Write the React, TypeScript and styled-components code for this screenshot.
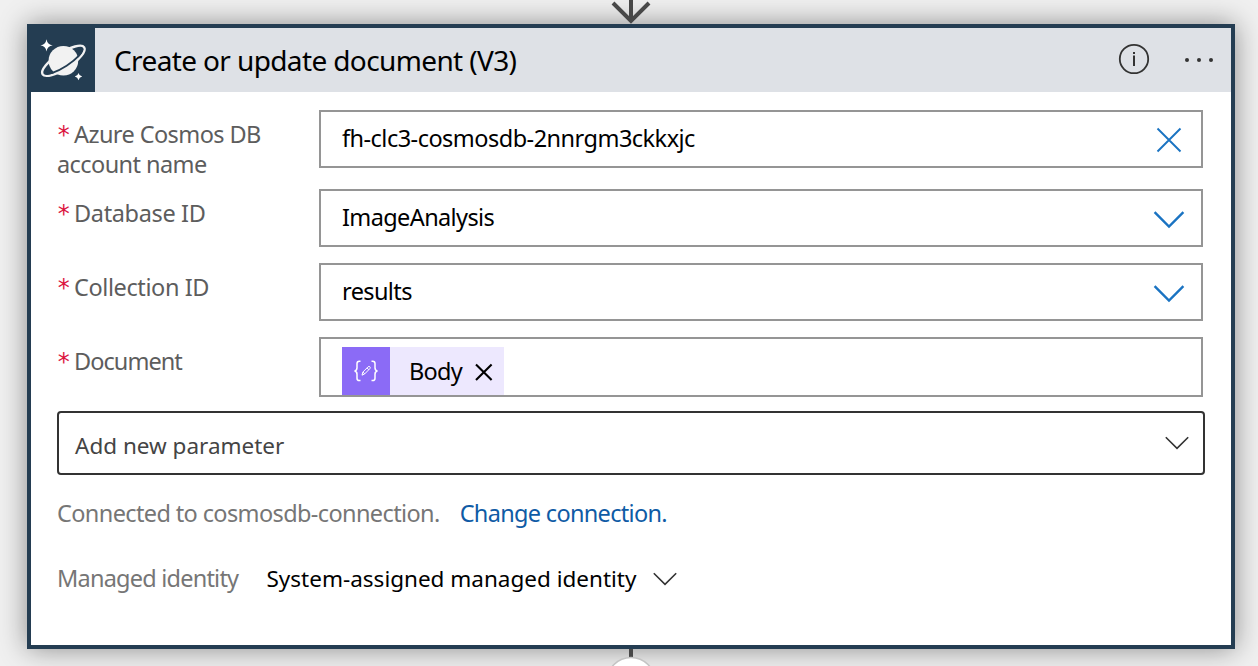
import React from "react";
import styled, { createGlobalStyle } from "styled-components";

const navy = "#243d52";

const GlobalStyle = createGlobalStyle`
  * { box-sizing: border-box; }
  body {
    margin: 0;
    background: #f0f0f0;
    font-family: "Noto Sans", "Open Sans", sans-serif;
    overflow: hidden;
  }
  svg { display: block; flex: none; }
`;

const Canvas = styled.main`
  width: 1258px;
  height: 666px;
  padding-left: 27px;
  overflow: hidden;
  display: flex;
  flex-direction: column;
`;

const Connector = styled.div<{ $height: number }>`
  width: 1208px;
  height: ${(p) => p.$height}px;
  flex: none;
  display: flex;
  justify-content: center;
  position: relative;
  z-index: 1;
`;

const Card = styled.section`
  width: 1208px;
  height: 625px;
  flex: none;
  background: #fff;
  border: 4px solid ${navy};
  box-shadow: 0 0 26px rgba(0, 0, 0, 0.42);
`;

const Header = styled.header`
  height: 64px;
  display: flex;
  align-items: center;
  background: #dee1e6;
`;

const Brand = styled.div`
  width: 64px;
  height: 64px;
  background: ${navy};
`;

const Title = styled.h1`
  flex: 1;
  margin: 0;
  padding: 0 0 1px 19px;
  font-size: 28px;
  font-weight: 400;
  line-height: 38px;
  letter-spacing: -0.62px;
  color: #000;
`;

const HeaderActions = styled.div`
  display: flex;
  align-items: center;
  gap: 34px;
  padding: 0 17px 2px 0;
`;

const Body = styled.div`
  padding: 18px 26px 0;
`;

const Row = styled.div<{ $gap?: number }>`
  display: flex;
  align-items: flex-start;
  margin-bottom: ${(p) => p.$gap ?? 16}px;
`;

const Label = styled.label<{ $spacing: number }>`
  width: 262px;
  padding-top: 9px;
  font-size: 23.5px;
  line-height: 30px;
  letter-spacing: ${(p) => p.$spacing}px;
  color: #5d5d5d;
`;

const Required = styled.span`
  display: inline-block;
  width: 17px;
  padding-left: 0.7px;
  font-family: "DejaVu Sans", sans-serif;
  font-size: 24px;
  line-height: 24px;
  letter-spacing: 0;
  color: #dc1440;
`;

const Field = styled.div<{ $tokens?: boolean }>`
  width: 884px;
  height: ${(p) => (p.$tokens ? 60 : 58)}px;
  border: 2px solid #959595;
  display: flex;
  align-items: ${(p) => (p.$tokens ? "flex-end" : "center")};
  justify-content: space-between;
  padding: 0 16px 0 21px;
`;

const Value = styled.span<{ $spacing: number }>`
  font-size: 23.5px;
  line-height: 32px;
  letter-spacing: ${(p) => p.$spacing}px;
  padding-bottom: 2px;
  color: #000;
`;

const Token = styled.div`
  display: flex;
  align-items: center;
  width: 162px;
  height: 48px;
  background: #ede8fe;
`;

const TokenIcon = styled.div`
  width: 48px;
  height: 48px;
  background: #8b6bf6;
`;

const TokenText = styled.span`
  width: 84px;
  padding-left: 19px;
  font-size: 23.5px;
  letter-spacing: -0.7px;
  color: #000;
`;

const AddParameter = styled.div`
  width: 1148px;
  height: 64px;
  margin-top: -2px;
  border: 2px solid #333;
  border-radius: 4px;
  display: flex;
  align-items: center;
  justify-content: space-between;
  padding: 4px 14px 0 16px;
  font-size: 22.5px;
  color: #444;
  svg { margin-bottom: 5px; }
`;

const Connection = styled.div`
  display: flex;
  gap: 20px;
  margin-top: 22px;
  font-size: 23.5px;
  line-height: 32px;
  letter-spacing: -0.62px;
  color: #767676;
`;

const Link = styled.a`
  color: #0f5ba5;
  letter-spacing: -0.68px;
`;

const Identity = styled.div`
  display: flex;
  align-items: center;
  margin-top: 32px;
  line-height: 32px;
  color: #000;
  svg { margin-top: 2px; }
`;

const IdentityLabel = styled.span`
  width: 209.5px;
  font-size: 23.5px;
  letter-spacing: -0.78px;
  color: #767676;
`;

const IdentityValue = styled.span`
  width: 386.5px;
  font-size: 22.5px;
  padding-top: 2px;
`;

const Cosmos = () => (
  <svg width="64" height="64" viewBox="31 28 64 64">
    <g fill="none" stroke="#f2f2f2" strokeWidth="2.4">
      <ellipse cx="63.4" cy="60.8" rx="24.8" ry="8" transform="rotate(-33 63.4 60.8)" />
      <circle cx="63.4" cy="60.8" r="14.8" fill="#f2f2f2" stroke="none" />
      <path d="M41 60.8 A22.4 5.9 0 0 0 85.8 60.8" transform="rotate(-33 63.4 60.8)" stroke={navy} strokeWidth="1.8" />
    </g>
    <path fill="#fff" d="M46.5 39.2Q47.3 44.5 52.7 45.3Q47.3 46.1 46.5 51.4Q45.7 46.1 40.5 45.3Q45.7 44.5 46.5 39.2ZM78.5 72.9Q79.2 75.9 82.2 76.6Q79.2 77.3 78.5 80.3Q77.8 77.3 74.8 76.6Q77.8 75.9 78.5 72.9Z" />
  </svg>
);

const Info = () => (
  <svg width="32" height="32" viewBox="0 0 32 32">
    <circle cx="16" cy="16" r="14.2" fill="none" stroke="#333" strokeWidth="1.8" />
    <path d="M15 9h2v2h-2zM15 12.5h2V23h-2z" fill="#333" />
  </svg>
);

const More = () => (
  <svg width="30" height="8" viewBox="0 0 30 8">
    <g fill="#333">
      <circle cx="3" cy="5" r="2" />
      <circle cx="15" cy="5" r="2" />
      <circle cx="27" cy="5" r="2" />
    </g>
  </svg>
);

const Clear = () => (
  <svg width="32" height="32" viewBox="0 0 32 32">
    <path d="M4.5 5.5 27.5 28.5M27.5 5.5 4.5 28.5" stroke="#1a73c2" strokeWidth="1.9" />
  </svg>
);

const Drop = () => (
  <svg width="32" height="32" viewBox="0 0 32 32">
    <path d="M1.6 10.2 16 24.6 30.4 10.2" fill="none" stroke="#1a73c2" strokeWidth="2.4" />
  </svg>
);

const Chevron = () => (
  <svg width="24" height="14" viewBox="0 0 24 14">
    <path d="M.8 1.2 12 12.4 23.2 1.2" fill="none" stroke="#333" strokeWidth="1.6" />
  </svg>
);

const Compose = () => (
  <svg width="48" height="48" viewBox="0 0 48 48" fill="none" stroke="#fff" strokeWidth="1.5">
    <path d="M18.5 14.2h-1.2q-2.3 0-2.3 2.4v4.2q0 2.9-2.5 3.2q2.5.3 2.5 3.2v4q0 2.4 2.3 2.4h1.2M29.5 14.2h1.2q2.3 0 2.3 2.4v4.2q0 2.9 2.5 3.2q-2.5.3-2.5 3.2v4q0 2.4-2.3 2.4h-1.2" />
    <path strokeWidth="1" d="m20 28.2.9-3.2 5.2-5.2q1-.8 1.8 0t0 1.8l-5.2 5.3zM25 20.9l1.9 1.9M20.9 25l1.8 1.9" />
  </svg>
);

const Remove = () => (
  <svg width="20" height="20" viewBox="0 0 20 20">
    <path d="M2 3.4 17.6 19M17.6 3.4 2 19" stroke="#000" strokeWidth="2.1" />
  </svg>
);

export default function App() {
  return (
    <>
      <GlobalStyle />
      <Canvas>
        <Connector $height={24}>
          <svg width="44" height="24" viewBox="0 0 44 24">
            <path d="M22 0V20M4 3 22 21 40 3" fill="none" stroke="#484848" strokeWidth="4" />
          </svg>
        </Connector>
        <Card>
          <Header>
            <Brand><Cosmos /></Brand>
            <Title>Create or update document (V3)</Title>
            <HeaderActions><Info /><More /></HeaderActions>
          </Header>
          <Body>
            <Row $gap={10}>
              <Label $spacing={-0.58}><Required>*</Required>Azure Cosmos DB<br />account name</Label>
              <Field><Value $spacing={-0.52}>fh-clc3-cosmosdb-2nnrgm3ckkxjc</Value><Clear /></Field>
            </Row>
            <Row>
              <Label $spacing={-0.35}><Required>*</Required>Database ID</Label>
              <Field><Value $spacing={-0.62}>ImageAnalysis</Value><Drop /></Field>
            </Row>
            <Row>
              <Label $spacing={-0.4}><Required>*</Required>Collection ID</Label>
              <Field><Value $spacing={-0.6}>results</Value><Drop /></Field>
            </Row>
            <Row>
              <Label $spacing={-0.95}><Required>*</Required>Document</Label>
              <Field $tokens>
                <Token>
                  <TokenIcon><Compose /></TokenIcon>
                  <TokenText>Body</TokenText>
                  <Remove />
                </Token>
              </Field>
            </Row>
            <AddParameter>Add new parameter<Chevron /></AddParameter>
            <Connection>
              <span>Connected to cosmosdb-connection.</span>
              <Link>Change connection.</Link>
            </Connection>
            <Identity>
              <IdentityLabel>Managed identity</IdentityLabel>
              <IdentityValue>System-assigned managed identity</IdentityValue>
              <Chevron />
            </Identity>
          </Body>
        </Card>
        <Connector $height={17}>
          <svg width="50" height="17" viewBox="0 0 50 17">
            <path d="M25 0V9" stroke="#484848" strokeWidth="4" />
            <circle cx="25" cy="32.5" r="24" fill="#fff" stroke="#c4c4c4" strokeWidth="1.6" />
          </svg>
        </Connector>
      </Canvas>
    </>
  );
}
